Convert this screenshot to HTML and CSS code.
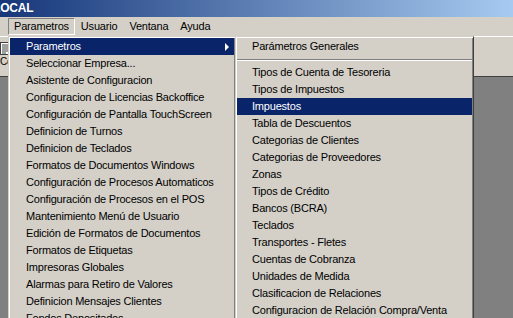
FILE: index.html
```html
<!DOCTYPE html>
<html lang="es">
<head>
  <meta charset="UTF-8" />
  <title>LOCAL</title>
  <link rel="stylesheet" href="styles.css">
</head>
<body>
  <div class="window">
    <div class="titlebar"><span class="title">LOCAL</span></div>

    <div class="menubar">
      <span class="menubar-item open">Parametros</span>
      <span class="menubar-item">Usuario</span>
      <span class="menubar-item">Ventana</span>
      <span class="menubar-item">Ayuda</span>
    </div>

    <div class="toolbar">
      <div class="tool-btn">
        <svg width="11" height="13" viewBox="0 0 11 13">
          <rect x="0.5" y="0.5" width="10" height="12" fill="#fff" stroke="#404040" />
          <path d="M2 3h7M2 5h7M2 7h7M2 9h7M2 11h4" stroke="#404040" />
        </svg>
        <span class="tool-label">Co</span>
      </div>
    </div>

    <div class="mdi"></div>

    <ul class="menu menu-main">
      <li class="selected has-sub">Parametros</li>
      <li>Seleccionar Empresa...</li>
      <li>Asistente de Configuracion</li>
      <li>Configuracion de Licencias Backoffice</li>
      <li>Configuración de Pantalla TouchScreen</li>
      <li>Definicion de Turnos</li>
      <li>Definicion de Teclados</li>
      <li>Formatos de Documentos Windows</li>
      <li>Configuración de Procesos Automaticos</li>
      <li>Configuración de Procesos en el POS</li>
      <li>Mantenimiento Menú de Usuario</li>
      <li>Edición de Formatos de Documentos</li>
      <li>Formatos de Etiquetas</li>
      <li>Impresoras Globales</li>
      <li>Alarmas para Retiro de Valores</li>
      <li>Definicion Mensajes Clientes</li>
      <li>Fondos Depositados</li>
    </ul>

    <ul class="menu menu-sub">
      <li>Parámetros Generales</li>
      <li class="separator"></li>
      <li>Tipos de Cuenta de Tesoreria</li>
      <li>Tipos de Impuestos</li>
      <li class="selected">Impuestos</li>
      <li>Tabla de Descuentos</li>
      <li>Categorias de Clientes</li>
      <li>Categorias de Proveedores</li>
      <li>Zonas</li>
      <li>Tipos de Crédito</li>
      <li>Bancos (BCRA)</li>
      <li>Teclados</li>
      <li>Transportes - Fletes</li>
      <li>Cuentas de Cobranza</li>
      <li>Unidades de Medida</li>
      <li>Clasificacion de Relaciones</li>
      <li>Configuracion de Relación Compra/Venta</li>
    </ul>
  </div>
</body>
</html>
```

FILE: styles.css
```css
body {
  margin: 0;
  font-family: "Liberation Sans", Arial, sans-serif;
  font-size: 11px;
  letter-spacing: -0.2px;
  color: #000;
}
.window {
  position: relative;
  width: 513px;
  height: 318px;
  overflow: hidden;
  background: #808080;
  display: flex;
  flex-direction: column;
}
.titlebar {
  height: 17px;
  line-height: 17px;
  background: linear-gradient(to right, #163679, #a6caf0);
  color: #fff;
  font-size: 12px;
  font-weight: bold;
  white-space: nowrap;
  overflow: hidden;
}
.title {
  margin-left: -7px;
}
.menubar {
  height: 19px;
  background: #d4d0c8;
  display: flex;
  align-items: center;
  padding-left: 8px;
}
.menubar-item {
  padding: 0 5px;
  line-height: 15px;
  border: 1px solid transparent;
}
.menubar-item.open {
  border-color: #808080 #fff #fff #808080;
}
.toolbar {
  height: 39px;
  background: #d4d0c8;
  border-top: 1px solid #fff;
  border-bottom: 1px solid #404040;
  display: flex;
}
.tool-btn {
  display: flex;
  flex-direction: column;
  padding: 5px 0 0 0;
  font-size: 10px;
  white-space: nowrap;
}
.tool-label {
  margin-top: 1px;
}
.mdi {
  flex: 1;
  background: #808080;
}
.menu {
  position: absolute;
  top: 36px;
  margin: 0;
  padding: 1px;
  list-style: none;
  background: #d4d0c8;
  border: 1px solid;
  border-color: #d4d0c8 #404040 #404040 #d4d0c8;
  box-shadow: inset 1px 1px #fff, inset -1px -1px #808080;
  white-space: nowrap;
}
.menu li {
  position: relative;
  height: 17px;
  line-height: 17px;
}
.menu-main {
  left: 8px;
  width: 228px;
  box-sizing: border-box;
}
.menu-main li {
  padding-left: 16px;
}
.menu-sub {
  left: 235px;
  width: 239px;
  box-sizing: border-box;
}
.menu-sub li {
  padding-left: 15px;
}
.menu li.selected {
  background: #0a246a;
  color: #fff;
}
.menu li.has-sub::after {
  content: "";
  position: absolute;
  right: 5px;
  top: 5px;
  border-left: 4px solid #fff;
  border-top: 4px solid transparent;
  border-bottom: 4px solid transparent;
}
.menu li.separator {
  height: 0;
  margin: 4px 0 3px;
  padding: 0;
  border-top: 1px solid #808080;
  border-bottom: 1px solid #fff;
}
```
